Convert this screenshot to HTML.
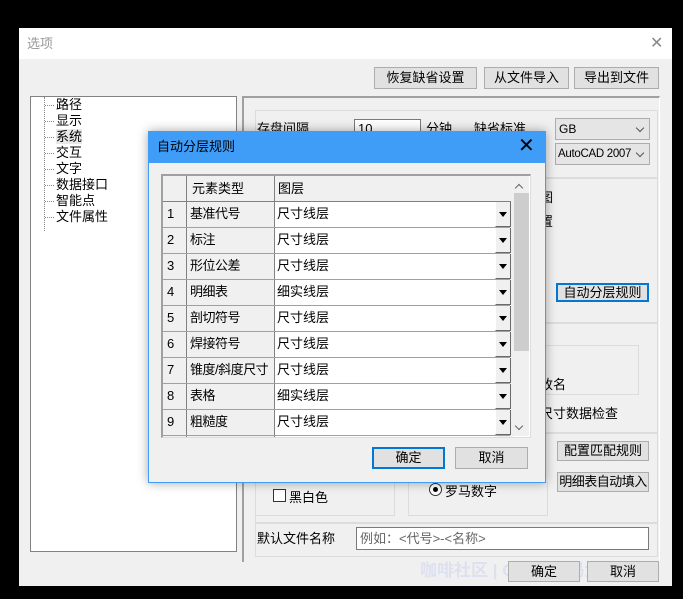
<!DOCTYPE html><html><head><meta charset="utf-8"><style>
*{margin:0;padding:0;box-sizing:border-box}
body{width:683px;height:599px;background:#000;position:relative;overflow:hidden;font-family:"Liberation Sans","Noto Sans CJK SC",sans-serif;font-size:13px;color:#000}
.a{position:absolute;white-space:nowrap}
.btn{position:absolute;background:#e1e1e1;border:1px solid #adadad;text-align:center;line-height:19px;font-size:13px;white-space:nowrap}
.grp{position:absolute;border:1px solid #dcdcdc}
.cell{position:absolute;line-height:25px;white-space:nowrap}
.chev{position:absolute;right:6px;top:6px;width:6px;height:6px;border-right:1px solid #555;border-bottom:1px solid #555;transform:rotate(45deg)}
.tr{position:relative;padding-left:11px}
.tr:before{content:"";position:absolute;left:0;top:8px;width:9px;border-top:1px dotted #888}
</style></head><body>
<div class="a" style="left:19px;top:28px;width:653px;height:558px;background:#f0f0f0"></div>
<div class="a" style="left:19px;top:28px;width:653px;height:31px;background:#fff"></div>
<div class="a" style="left:27px;top:35px;line-height:18px;color:#999;font-size:13px">选项</div>
<div class="a" style="left:650px;top:33px;font-size:16px;color:#888">✕</div>
<div class="btn" style="left:374px;top:67px;width:103px;height:22px">恢复缺省设置</div>
<div class="btn" style="left:484px;top:67px;width:85px;height:22px">从文件导入</div>
<div class="btn" style="left:574px;top:67px;width:85px;height:22px">导出到文件</div>
<div class="a" style="left:30px;top:96px;width:207px;height:456px;background:#fff;border:1px solid #828282"></div>
<div class="a" style="left:44px;top:97px;line-height:16px;font-size:13px;border-left:1px dotted #888;padding-bottom:6px">
<div class="tr">路径</div><div class="tr">显示</div><div class="tr"><span style="background:#e8e8e8">系统</span></div><div class="tr">交互</div><div class="tr">文字</div><div class="tr">数据接口</div><div class="tr">智能点</div><div class="tr">文件属性</div></div>
<div class="a" style="left:242px;top:96px;width:418px;height:466px;border-left:2px solid #a0a0a0;border-top:2px solid #a0a0a0;border-right:1px solid #fff"></div>
<div class="grp" style="left:255px;top:110px;width:403px;height:68px"></div>
<div class="a" style="left:257px;top:118px">存盘间隔</div>
<div class="a" style="left:354px;top:119px;width:67px;height:20px;background:#fff;border:1px solid #7a7a7a;padding-left:3px;line-height:18px">10</div>
<div class="a" style="left:426px;top:118px">分钟</div>
<div class="a" style="left:474px;top:118px">缺省标准</div>
<div class="a" style="left:555px;top:118px;width:95px;height:22px;background:#e5e5e5;border:1px solid #adadad;padding-left:3px;line-height:20px;font-size:12px">GB<span class="chev"></span></div>
<div class="a" style="left:555px;top:143px;width:95px;height:22px;background:#e5e5e5;border:1px solid #adadad;padding-left:2px;line-height:20px;font-size:11.5px;letter-spacing:-0.3px;overflow:hidden">AutoCAD 2007<span class="chev"></span></div>
<div class="a" style="left:540px;top:187px">图</div>
<div class="a" style="left:540px;top:211px">置</div>
<div class="grp" style="left:255px;top:178px;width:403px;height:145px"></div>
<div class="btn" style="left:556px;top:283px;width:93px;height:19px;border:2px solid #0078d7;line-height:15px">自动分层规则</div>
<div class="grp" style="left:255px;top:323px;width:403px;height:110px"></div>
<div class="grp" style="left:540px;top:345px;width:99px;height:50px"></div>
<div class="a" style="left:540px;top:374px">改名</div>
<div class="a" style="left:540px;top:403px">尺寸数据检查</div>
<div class="grp" style="left:255px;top:433px;width:403px;height:90px"></div>
<div class="grp" style="left:255px;top:482px;width:140px;height:34px"></div>
<div class="grp" style="left:408px;top:482px;width:140px;height:34px"></div>
<div class="a" style="left:273px;top:489px;width:13px;height:13px;border:1px solid #333;background:#fff"></div>
<div class="a" style="left:289px;top:487px">黑白色</div>
<div class="a" style="left:429px;top:483px;width:13px;height:13px;border:1px solid #333;border-radius:50%;background:#fff"><div style="margin:3px;width:5px;height:5px;border-radius:50%;background:#000"></div></div>
<div class="a" style="left:445px;top:481px">罗马数字</div>
<div class="btn" style="left:557px;top:441px;width:92px;height:20px;line-height:18px">配置匹配规则</div>
<div class="btn" style="left:557px;top:472px;width:92px;height:20px;line-height:18px;letter-spacing:-0.5px">明细表自动填入</div>
<div class="grp" style="left:255px;top:523px;width:403px;height:34px"></div>
<div class="a" style="left:257px;top:528px">默认文件名称</div>
<div class="a" style="left:356px;top:527px;width:293px;height:23px;background:#fff;border:1px solid #7a7a7a;padding-left:3px;line-height:21px;color:#666">例如：&lt;代号&gt;-&lt;名称&gt;</div>
<div class="a" style="left:420px;top:556px;font-size:17px;font-weight:bold;color:#dde0f0">咖啡社区 | CAXA数码大师</div>
<div class="btn" style="left:508px;top:561px;width:72px;height:21px">确定</div>
<div class="btn" style="left:587px;top:561px;width:72px;height:21px">取消</div>

<div class="a" style="left:148px;top:131px;width:398px;height:352px;background:#f0f0f0;border:1px solid #3f9cf7;box-shadow:0 0 10px rgba(0,0,0,.35)"></div>
<div class="a" style="left:148px;top:131px;width:398px;height:32px;background:#3f9cf7"></div>
<div class="a" style="left:157px;top:138px;line-height:18px">自动分层规则</div>
<div class="a" style="left:518px;top:133px;font-size:20px">✕</div>
<div class="a" style="left:161px;top:174px;width:370px;height:264px;background:#fff;border:2px solid #a0a0a0;border-right:1px solid #ddd;border-bottom:1px solid #ddd;overflow:hidden">
<div class="a" style="left:0;top:0;width:350px;height:262px;background:#f0f0f0"></div>
<div class="a" style="left:112px;top:26px;width:222px;height:240px;background:#fff"></div>
<div class="a" style="left:23px;top:0;width:1px;height:262px;background:#808080"></div>
<div class="a" style="left:111px;top:0;width:1px;height:262px;background:#808080"></div>
<div class="a" style="left:0;top:25px;width:111px;height:1px;background:#808080"></div>
<div class="a" style="left:111px;top:25px;width:239px;height:1px;background:#808080"></div>
<div class="cell" style="left:29px;top:0">元素类型</div><div class="cell" style="left:115px;top:0">图层</div>
</div>
<div id="rows"></div>
<div class="a" style="left:511px;top:176px;width:18px;height:260px;background:#f0f0f0"></div>
<div class="a" style="left:514px;top:193px;width:15px;height:158px;background:#cdcdcd"></div>
<div class="a" style="left:516px;top:185px;width:6px;height:6px;border-left:1px solid #666;border-top:1px solid #666;transform:rotate(45deg)"></div>
<div class="a" style="left:516px;top:423px;width:6px;height:6px;border-right:1px solid #666;border-bottom:1px solid #666;transform:rotate(45deg)"></div>
<div class="btn" style="left:372px;top:447px;width:73px;height:22px;border:2px solid #0078d7;line-height:18px">确定</div>
<div class="btn" style="left:455px;top:447px;width:73px;height:22px">取消</div>
<script>
var t=[["基准代号","尺寸线层"],["标注","尺寸线层"],["形位公差","尺寸线层"],["明细表","细实线层"],["剖切符号","尺寸线层"],["焊接符号","尺寸线层"],["锥度/斜度尺寸","尺寸线层"],["表格","细实线层"],["粗糙度","尺寸线层"]];
var h="";t.forEach(function(r,i){var y=201+i*26;
h+='<div class="a" style="left:163px;top:'+(y+26)+'px;width:347px;height:1px;background:#a0a0a0"></div>';
h+='<div class="cell" style="left:167px;top:'+y+'px">'+(i+1)+'</div>';
h+='<div class="cell" style="left:190px;top:'+y+'px;letter-spacing:-0.5px">'+r[0]+'</div>';
h+='<div class="cell" style="left:277px;top:'+y+'px">'+r[1]+'</div>';
h+='<div class="a" style="left:495px;top:'+(y+1)+'px;width:16px;height:25px;background:#f0f0f0;border-left:1px solid #fff;border-right:1px solid #696969;border-bottom:1px solid #696969"><div style="margin:10px 0 0 3px;width:0;height:0;border-left:4px solid transparent;border-right:4px solid transparent;border-top:5px solid #000"></div></div>';});
document.getElementById("rows").outerHTML=h;
</script>
</body></html>
